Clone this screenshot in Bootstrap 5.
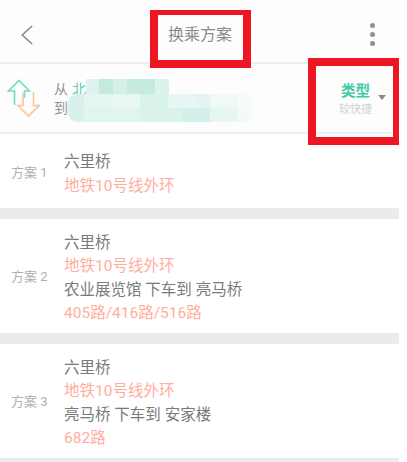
<!DOCTYPE html>
<html lang="zh-CN">
<head>
<meta charset="utf-8">
<title>换乘方案</title>
<link href="https://cdn.jsdelivr.net/npm/bootstrap@5.3.0/dist/css/bootstrap.min.css" rel="stylesheet">
<style>
html, body { margin: 0; background: #fff; }
body { width: 407px; height: 462px; overflow: hidden; font-family: Roboto, "Noto Sans CJK SC", sans-serif; color: #666; }
.page-wrap { width: 399px; height: 462px; overflow: hidden; position: relative; }
.top-bar { height: 64px; background: #fdfdfd; border-bottom: 2px solid #eee; padding: 8px 24px 0 21px; }
.top-title { font-size: 16px; color: #8a8a8a; margin-right: 3px; }
.dots { gap: 3.8px; margin-top: -1px; }
.dots i { display: block; width: 5px; height: 5px; border-radius: 50%; background: #919191; }
.route-bar { height: 70px; background: #fdfdfd; border-bottom: 2px solid #eee; }
.swap-box { width: 54px; flex-shrink: 0; }
.swap-box svg { display: block; }
.from-to { font-size: 14px; color: #929292; width: 200px; margin-top: 5px; }
.from-row { height: 15px; line-height: 15px; }
.from-row span { margin-top: 3px; }
.from-row b { font-weight: 400; color: #5ccfb0; margin: 3px 0 0 4px; width: 14px; height: 15px; overflow: hidden; display: block; }
.to-row { height: 28px; }
.blur-a { width: 83px; height: 15px; background: linear-gradient(90deg, #dff3ee 0 13px, #c3eade 13px 27px, #d4f0e8 27px 41px, #c5ebe1 41px 69px, #dcf3ed 69px 83px); }
.blur-b { width: 184px; height: 28px; border-radius: 9px; background:
  linear-gradient(90deg, #d8f1eb 0 16px, #e4f6f1 16px 44px, #e9f7f3 44px 72px, #daf2ec 72px 100px, #e6f6f2 100px 128px, #e2f5f0 128px 142px, #f0f9f7 142px 170px, #f5fbf9 170px 184px) top / 100% 50% no-repeat,
  linear-gradient(90deg, #d8f1eb 0 16px, #e1f5f0 16px 72px, #daf2ec 72px 114px, #d4f0ea 114px 142px, #e6f6f2 142px 170px, #f3faf8 170px 184px) bottom / 100% 50% no-repeat; }
.to-label { width: 14px; flex-shrink: 0; }
.type-box { margin-left: auto; padding-right: 13px; margin-top: 4px; }
.type-main { font-size: 14.5px; font-weight: 700; color: #3fcba4; line-height: 18px; }
.type-sub { font-size: 11px; color: #d2d2d2; line-height: 17px; }
.caret-mark { width: 0; height: 0; border-left: 4.5px solid transparent; border-right: 4.5px solid transparent; border-top: 5px solid #888; margin-left: 6px; margin-bottom: 5px; }
.plan-row { background: #fff; border-bottom: 11px solid #ebebeb; }
.plan-one { height: 85px; padding-top: 4px; }
.plan-two { height: 125px; padding-top: 2px; }
.plan-three { height: 125px; padding-top: 2px; }
.plan-tag { width: 64px; padding-left: 11px; font-size: 13px; color: #b0b0b0; flex-shrink: 0; }
.plan-lines { font-size: 15.5px; line-height: 23.3px; color: #7a7a7a; padding-top: 3px; }
.line-hot { color: #ffae9e; }
.mark-frame { position: absolute; border: 8px solid #ee1622; }
.frame-title { left: 150px; top: 10px; width: 101px; height: 58px; border-top-width: 5px; }
.frame-type { left: 308px; top: 58px; width: 91px; height: 87px; border-right-width: 6px; }
</style>
</head>
<body>
<div class="page-wrap">
<header class="top-bar d-flex align-items-center justify-content-between">
  <svg width="12" height="20" viewBox="0 0 12 20" aria-label="返回"><path d="M11.2 1 1.200 10l10 9" fill="none" stroke="#888" stroke-width="1.5"/></svg>
  <div class="top-title">换乘方案</div>
  <div class="dots d-flex flex-column"><i></i><i></i><i></i></div>
</header>
<section class="route-bar d-flex align-items-center">
  <div class="swap-box">
    <svg width="54" height="40" viewBox="0 78 54 40" aria-hidden="true">
      <path d="M23 93v12.500h-5L28.500 116 39 105.500h-5.500V92" fill="none" stroke="#fbc68f" stroke-width="1.6"/>
      <path d="M14.500 105V91H8.500L19 80.500 29.500 91h-5v7" fill="none" stroke="#74dac4" stroke-width="1.6"/>
    </svg>
  </div>
  <div class="from-to">
    <div class="from-row d-flex align-items-start"><span>从</span><b>北</b><div class="blur-a"></div></div>
    <div class="to-row d-flex align-items-center"><span class="to-label">到</span><div class="blur-b"></div></div>
  </div>
  <div class="type-box d-flex align-items-center">
    <div class="text-center">
      <div class="type-main">类型</div>
      <div class="type-sub">较快捷</div>
    </div>
    <div class="caret-mark"></div>
  </div>
</section>
<section class="plan-row plan-one d-flex align-items-center">
  <div class="plan-tag">方案 1</div>
  <div class="plan-lines"><div>六里桥</div><div class="line-hot">地铁10号线外环</div></div>
</section>
<section class="plan-row plan-two d-flex align-items-center">
  <div class="plan-tag">方案 2</div>
  <div class="plan-lines"><div>六里桥</div><div class="line-hot">地铁10号线外环</div><div>农业展览馆 下车到 亮马桥</div><div class="line-hot">405路/416路/516路</div></div>
</section>
<section class="plan-row plan-three d-flex align-items-center">
  <div class="plan-tag">方案 3</div>
  <div class="plan-lines"><div>六里桥</div><div class="line-hot">地铁10号线外环</div><div>亮马桥 下车到 安家楼</div><div class="line-hot">682路</div></div>
</section>
<div class="mark-frame frame-title"></div>
<div class="mark-frame frame-type"></div>
</div>
<script src="https://cdn.jsdelivr.net/npm/bootstrap@5.3.0/dist/js/bootstrap.bundle.min.js"></script>
</body>
</html>
